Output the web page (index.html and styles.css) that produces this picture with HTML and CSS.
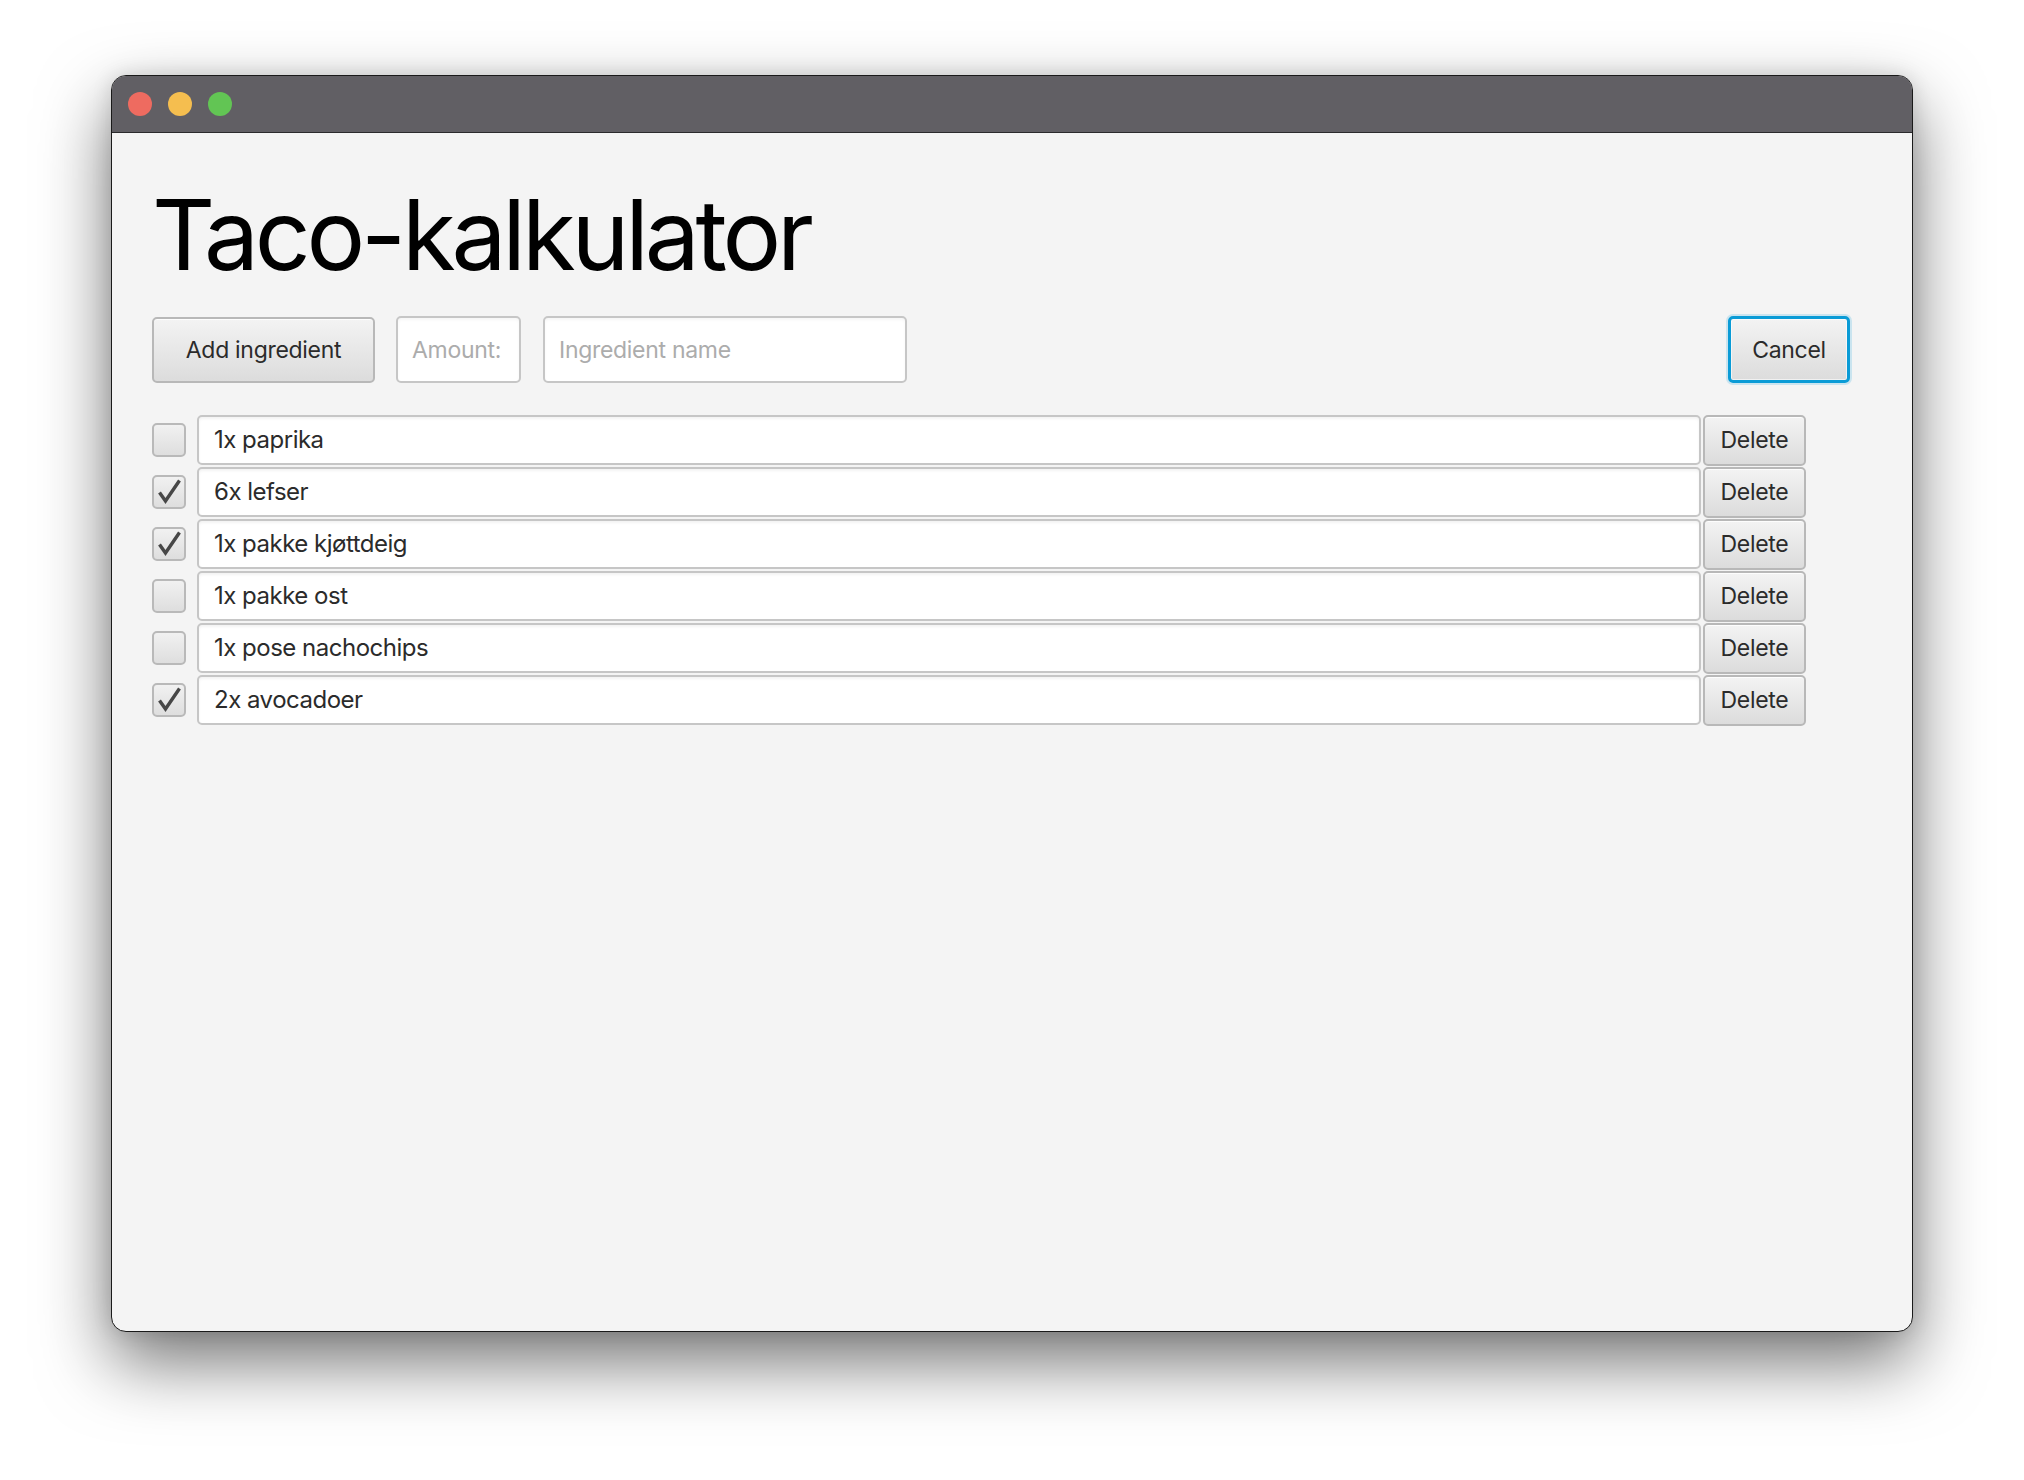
FILE: index.html
```html
<!DOCTYPE html>
<html lang="no">
<head>
<meta charset="utf-8">
<title>Taco-kalkulator</title>
<link rel="stylesheet" href="styles.css">
</head>
<body>
<div class="window">
  <div class="titlebar">
    <span class="light red"></span>
    <span class="light yellow"></span>
    <span class="light green"></span>
  </div>
  <div class="content">
    <h1 class="title">Taco-kalkulator</h1>
    <div class="toolbar">
      <button class="btn btn-add">Add ingredient</button>
      <input class="field field-amount" placeholder="Amount:">
      <input class="field field-name" placeholder="Ingredient name">
      <button class="btn btn-cancel">Cancel</button>
    </div>
    <div class="list">
      <div class="row">
        <span class="check"></span>
        <div class="item">1x paprika</div>
        <button class="btn btn-delete">Delete</button>
      </div>
      <div class="row">
        <span class="check checked"><svg viewBox="0 0 30 30"><path d="M5.5 15.5 L11.5 24 L25.5 3.5" /></svg></span>
        <div class="item">6x lefser</div>
        <button class="btn btn-delete">Delete</button>
      </div>
      <div class="row">
        <span class="check checked"><svg viewBox="0 0 30 30"><path d="M5.5 15.5 L11.5 24 L25.5 3.5" /></svg></span>
        <div class="item">1x pakke kjøttdeig</div>
        <button class="btn btn-delete">Delete</button>
      </div>
      <div class="row">
        <span class="check"></span>
        <div class="item">1x pakke ost</div>
        <button class="btn btn-delete">Delete</button>
      </div>
      <div class="row">
        <span class="check"></span>
        <div class="item">1x pose nachochips</div>
        <button class="btn btn-delete">Delete</button>
      </div>
      <div class="row">
        <span class="check checked"><svg viewBox="0 0 30 30"><path d="M5.5 15.5 L11.5 24 L25.5 3.5" /></svg></span>
        <div class="item">2x avocadoer</div>
        <button class="btn btn-delete">Delete</button>
      </div>
    </div>
  </div>
</div>
</body>
</html>
```
FILE: styles.css
```css
html, body {
  margin: 0;
  padding: 0;
  background: #ffffff;
}
body {
  box-sizing: border-box;
  height: 1480px;
  overflow: hidden;
  padding: 75px 0 0 111px;
  font-family: Inter, "Liberation Sans", sans-serif;
}
.window {
  width: 1800px;
  height: 1255px;
  border: 1px solid #1a1a1a;
  border-radius: 15px;
  background: #f4f4f4;
  overflow: hidden;
  box-shadow: 0 30px 70px rgba(0, 0, 0, 0.55), 0 0 20px rgba(0, 0, 0, 0.12);
  display: flex;
  flex-direction: column;
}
.titlebar {
  height: 56px;
  background: #615f64;
  border-bottom: 1px solid #2a2a2c;
  display: flex;
  align-items: center;
  gap: 16px;
  padding-left: 16px;
  flex: none;
}
.light {
  width: 24px;
  height: 24px;
  border-radius: 50%;
  display: block;
}
.red { background: #ee6b60; }
.yellow { background: #f5be4f; }
.green { background: #62c554; }

.content {
  padding: 52px 62px 0 40px;
}
.title {
  margin: 0;
  font-family: Inter, "Liberation Sans", sans-serif;
  font-weight: 400;
  font-size: 98px;
  line-height: 100px;
  height: 100px;
  color: #000;
  letter-spacing: -4.2px;
}
.toolbar {
  margin-top: 31px;
  display: flex;
  align-items: center;
  height: 67px;
}
.btn {
  font-family: Inter, "Liberation Sans", sans-serif;
  font-size: 23px;
  color: #2b2b2b;
  border: 2px solid #b8b8b8;
  border-radius: 5px;
  background: linear-gradient(#f3f3f3, #dcdcdc);
  padding: 0;
  box-shadow: inset 0 1px 0 rgba(255,255,255,0.8);
  letter-spacing: -0.3px;
}
.btn-add {
  width: 223px;
  height: 66px;
}
.field {
  font-family: Inter, "Liberation Sans", sans-serif;
  font-size: 23px;
  height: 67px;
  box-sizing: border-box;
  border: 2px solid #c6c6c6;
  border-radius: 5px;
  background: #fff;
  padding: 0 14px;
  color: #2b2b2b;
  outline: none;
  letter-spacing: -0.3px;
  box-shadow: inset 0 2px 3px rgba(0,0,0,0.04);
}
.field::placeholder {
  color: #acacac;
}
.field-amount {
  width: 125px;
  margin-left: 21px;
}
.field-name {
  width: 364px;
  margin-left: 22px;
}
.btn-cancel {
  margin-left: auto;
  width: 122px;
  height: 67px;
  border: 3px solid #0a9bd6;
  box-shadow: 0 0 0 2px rgba(10, 155, 214, 0.18), inset 0 0 0 1px rgba(255,255,255,0.6);
}

.list {
  margin-top: 31px;
  width: 1654px;
}
.row {
  display: flex;
  align-items: center;
  height: 52px;
}
.check {
  width: 34px;
  height: 34px;
  box-sizing: border-box;
  border: 2px solid #b9b9b9;
  border-radius: 5px;
  background: linear-gradient(#f1f1f1, #dedede);
  flex: none;
  display: flex;
  align-items: center;
  justify-content: center;
}
.check svg {
  width: 30px;
  height: 30px;
  display: block;
}
.check path {
  fill: none;
  stroke: #474747;
  stroke-width: 3.4;
  stroke-linecap: butt;
  stroke-linejoin: miter;
}
.item {
  margin-left: 11px;
  flex: 1;
  height: 50px;
  box-sizing: border-box;
  border: 2px solid #c6c6c6;
  border-radius: 5px;
  background: #fff;
  box-shadow: inset 0 2px 3px rgba(0,0,0,0.05);
  font-size: 24px;
  color: #2b2b2b;
  line-height: 46px;
  padding-left: 15px;
  letter-spacing: -0.5px;
}
.btn-delete {
  margin-left: 2px;
  width: 103px;
  height: 51px;
  flex: none;
}
```
